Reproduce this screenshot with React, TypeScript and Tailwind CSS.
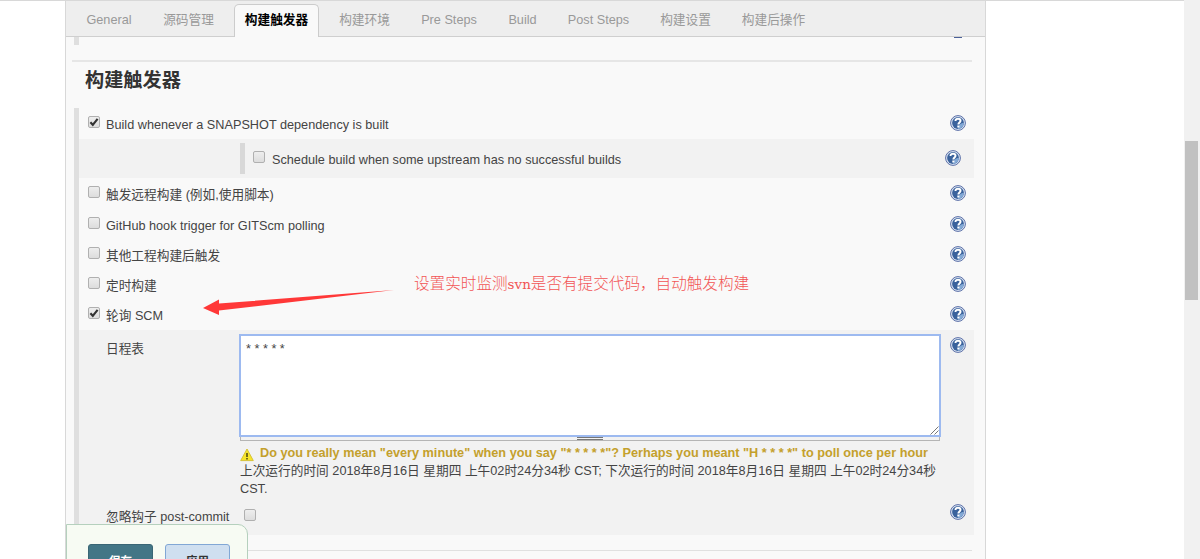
import clsx from 'clsx';

const tabs = [
  { label: 'General', width: 'w-[86px]', text: '' },
  { label: '源码管理', width: 'w-[82px]', text: 'pr-[9px]' },
  { label: '构建触发器', width: 'w-[85px]', text: '', active: true },
  { label: '构建环境', width: 'w-[91px]', text: '' },
  { label: 'Pre Steps', width: 'w-[78px]', text: '' },
  { label: 'Build', width: 'w-[69px]', text: '' },
  { label: 'Post Steps', width: 'w-[83px]', text: '' },
  { label: '构建设置', width: 'w-[91px]', text: '' },
  { label: '构建后操作', width: 'w-[85px]', text: '' },
];

const triggers = [
  { label: '触发远程构建 (例如,使用脚本)', checked: false, height: 'h-[31px]' },
  { label: 'GitHub hook trigger for GITScm polling', checked: false, height: 'h-[30px]' },
  { label: '其他工程构建后触发', checked: false, height: 'h-[30px]' },
  { label: '定时构建', checked: false, height: 'h-[30px]' },
  { label: '轮询 SCM', checked: true, height: 'h-[31px]' },
];

function HelpIcon() {
  return (
    <svg width="16" height="16" viewBox="0 0 16 16" className="block shrink-0">
      <circle cx="8" cy="8" r="7.4" fill="#dde6f4" stroke="#5a6ea6" />
      <circle cx="8" cy="8" r="5.9" fill="#3a629c" />
      <path d="M8 13.9A5.9 5.9 0 0 0 13.9 8c-3 0-5 1.5-5.9 5.9z" fill="#83a9d6" />
      <path
        d="M5.5 6C5.5 4.4 6.600 3.800 8 3.800s2.500.7 2.500 2c0 1.600-2.100 1.700-2.100 3.600"
        fill="none"
        stroke="#fff"
        strokeWidth="2"
      />
      <rect x="7.3" y="10.5" width="2.1" height="2" fill="#fff" />
    </svg>
  );
}

function Checkbox({ checked = false }: { checked?: boolean }) {
  return (
    <span className="flex size-3 shrink-0 items-center justify-center rounded-xs border border-[#b0b0b0] bg-linear-to-b from-[#eeeeee] to-[#dddddd]">
      {checked && (
        <svg width="10" height="10" viewBox="0 0 10 10" className="shrink-0">
          <path d="M1.4 5.2 3.8 7.8 8.6 1.8" fill="none" stroke="#333" strokeWidth="2.1" />
        </svg>
      )}
    </span>
  );
}

function TriggerRow({ label, checked, height }: { label: string; checked: boolean; height: string }) {
  return (
    <div className={clsx('flex items-start pl-[9px] pr-2', height)}>
      <div className="pt-2">
        <Checkbox checked={checked} />
      </div>
      <span className="ml-[6px] mt-2 leading-[18px]">{label}</span>
      <div className="ml-auto mt-[7px]">
        <HelpIcon />
      </div>
    </div>
  );
}

function WarningIcon() {
  return (
    <svg width="14" height="14" viewBox="0 0 14 14" className="shrink-0">
      <path d="M7 1 13.3 12.6H.7z" fill="#f7e52a" stroke="#d6c23a" strokeLinejoin="round" />
      <path d="M7 5v4M7 10v1.5" stroke="#4b4410" strokeWidth="1.5" />
    </svg>
  );
}

function Tabs() {
  return (
    <div className="flex h-9 shrink-0 border-b border-[#cfcfcf] bg-[#eeeeee] text-[#999]">
      {tabs.map((tab) => (
        <div
          key={tab.label}
          className={clsx(
            'flex shrink-0 justify-center whitespace-nowrap leading-[18px]',
            tab.width,
            tab.text,
            tab.active
              ? '-mb-px mt-[3px] rounded-t-[5px] border border-b-0 border-[#ccc] bg-[#f9f9f9] pt-[6px] font-bold text-black'
              : 'pt-[10px]'
          )}
        >
          {tab.label}
        </div>
      ))}
    </div>
  );
}

function ScheduleSection() {
  return (
    <div className="flex h-[205px] bg-[#f2f2f2]">
      <div className="w-[160px] shrink-0 pl-[27px]">
        <div className="pt-[10px] leading-[18px]">日程表</div>
        <div className="mt-[150px] whitespace-nowrap leading-[18px]">忽略钩子 post-commit</div>
      </div>
      <div className="w-[702px] shrink-0 pt-1">
        <div className="relative h-[103px] border-2 border-[#9dbaf0] bg-white px-[5px] pt-1 text-[12.7px] leading-[18px]">
          * * * * *
          <svg width="9" height="9" viewBox="0 0 9 9" className="absolute bottom-0 right-0">
            <path d="M.5 8.5 8.5.5M4.5 8.5l4-4" stroke="#777" />
          </svg>
        </div>
        <div className="mx-px flex h-1 justify-center border-x border-b border-[#b5b5b5]">
          <div className="h-[3px] w-[26px] border-y border-[#777]" />
        </div>
        <div className="flex h-[21px] items-end gap-[6px] pl-px font-bold text-[#c4a02c]">
          <WarningIcon />
          <span className="whitespace-nowrap leading-[18px]">
            Do you really mean "every minute" when you say "* * * * *"? Perhaps you meant "H * * * *" to poll once per hour
          </span>
        </div>
        <div className="whitespace-nowrap pl-px leading-[18px]">
          上次运行的时间 2018年8月16日 星期四 上午02时24分34秒 CST; 下次运行的时间 2018年8月16日 星期四 上午02时24分34秒
          <br />
          CST.
        </div>
        <div className="mt-[11px] pl-[5px]">
          <Checkbox />
        </div>
      </div>
      <div className="ml-auto pr-2 pt-[7px]">
        <HelpIcon />
        <div className="mt-[151px]">
          <HelpIcon />
        </div>
      </div>
    </div>
  );
}

export default function App() {
  return (
    <div className="relative flex h-[559px] w-[1200px] overflow-hidden bg-white font-['Liberation_Sans','Noto_Sans_CJK_SC',sans-serif] text-[12.7px] text-[#444]">
      <div className="flex min-w-0 grow border-t border-[#d8d8d8] pl-[65px]">
        <div className="flex w-[921px] flex-col border-x border-[#d8d8d8] bg-[#f9f9f9]">
          <Tabs />
          <div className="flex h-[23px] justify-between pl-2 pr-[23px]">
            <div className="h-2 w-[5px] bg-[#dfdfdf]" />
            <div className="h-px w-2 bg-[#4a6098]" />
          </div>
          <div className="ml-[6px] mr-[13px] h-[2px] shrink-0 bg-[#e6e6e6]" />
          <h1 className="h-[46px] shrink-0 pl-[19px] pt-[5px] text-[19.2px] font-bold leading-7 text-[#333]">构建触发器</h1>

          <div className="ml-2 mr-[11px] flex flex-col border-l-[5px] border-[#dfdfdf]">
            <TriggerRow label="Build whenever a SNAPSHOT dependency is built" checked height="h-[31px]" />
            <div className="flex h-[39px] items-start bg-[#f2f2f2] pl-[161px] pr-[13px] pt-1">
              <div className="h-[31px] w-[5px] bg-[#d8d8d8]" />
              <div className="ml-[8px] mt-[8px]">
                <Checkbox />
              </div>
              <span className="ml-[7px] mt-2 leading-[18px]">Schedule build when some upstream has no successful builds</span>
              <div className="ml-auto mt-[7px]">
                <HelpIcon />
              </div>
            </div>
            {triggers.map((t) => (
              <TriggerRow key={t.label} {...t} />
            ))}
            <ScheduleSection />
          </div>
          <div className="ml-[6px] mr-[13px] mt-[15px] h-px shrink-0 bg-[#e0e0e0]" />
        </div>
      </div>

      <div className="w-4 shrink-0 bg-[#f1f1f1] pl-px pt-[141px]">
        <div className="h-[159px] w-[13px] bg-[#c1c1c1]" />
      </div>

      {/* callout over the SCM polling row */}
      <svg width="194" height="32" viewBox="0 0 194 32" className="absolute left-[202px] top-[286px]">
        <path d="M192 4 17 17.5V13.500L1 22l16 7v-4.500z" fill="#ff3838" />
      </svg>
      <div className="absolute left-[414px] top-[273px] whitespace-nowrap font-['Liberation_Mono','Noto_Sans_CJK_SC',monospace] text-[15.6px] font-light leading-[22px] text-[#f25555]">
        设置实时监测<span className="font-['DejaVu_Serif',serif] text-[13.5px]">svn</span>是否有提交代码，自动触发构建
      </div>

      <div className="absolute left-[66px] top-[524px] flex h-[60px] w-[182px] gap-3 rounded-tr-[10px] border border-[#b5d0bd] bg-[#f7fbf3] pl-[21px] pt-[19px] font-bold">
        <button className="h-8 w-[65px] rounded-[3px] border border-[#3a6675] bg-[#437686] pt-1 text-[11.5px] text-white">保存</button>
        <button className="h-8 w-[65px] rounded-[3px] border border-[#81a7d5] bg-[#cfdff0] pt-1 text-[11.5px] text-[#333]">应用</button>
      </div>
    </div>
  );
}
